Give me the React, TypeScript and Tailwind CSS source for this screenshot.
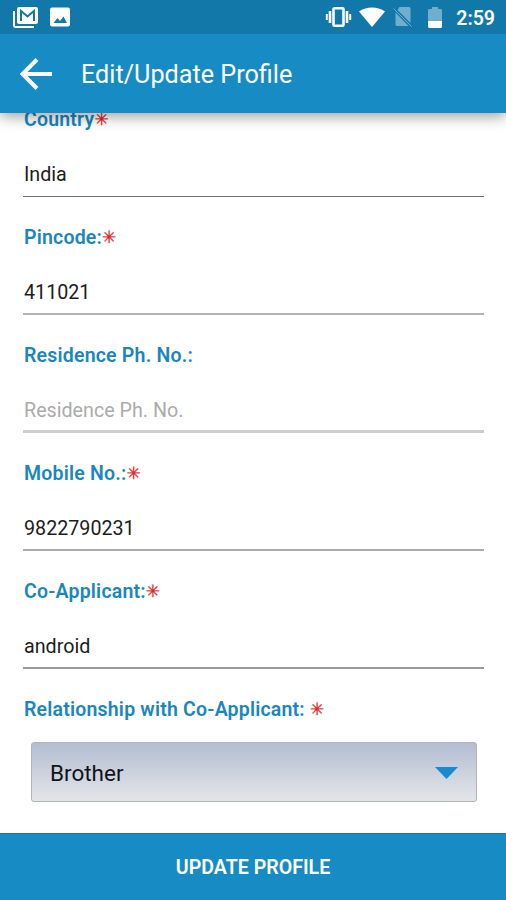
import type { ReactNode } from 'react';

interface Field {
  label: string;
  required: boolean;
  value: string;
  placeholder?: string;
  line: string;
}

const fields: Field[] = [
  { label: 'Country', required: true, value: 'India', line: 'border-b border-[#6f6f6f]' },
  { label: 'Pincode:', required: true, value: '411021', line: 'border-b-2 border-[#b3b3b3]' },
  { label: 'Residence Ph. No.:', required: false, value: '', placeholder: 'Residence Ph. No.', line: 'border-b-3 border-[#cdcdcd]' },
  { label: 'Mobile No.:', required: true, value: '9822790231', line: 'border-b-2 border-[#ababab]' },
  { label: 'Co-Applicant:', required: true, value: 'android', line: 'border-b-2 border-[#999999]' },
];

const Label = ({ required, children }: { required: boolean; children: ReactNode }) => (
  <div className="flex h-6 items-center whitespace-pre pl-px text-[19.500px] font-semibold leading-6 tracking-[0.2px] text-[#1a86c0]">
    <span>{children}</span>
    {required && (
      <span className="-mt-0.5 font-['DejaVu_Sans'] text-[17px] font-normal text-[#e02424] [-webkit-text-stroke:0.3px_#e02424]">✳</span>
    )}
  </div>
);

const StatusBar = () => (
  <div className="flex h-[34px] items-center justify-between bg-[#1278a9] pl-[13px] pr-[11px] text-white">
    <div className="flex items-center gap-3">
      <svg className="h-[21px] w-[25px]" viewBox="0 0 25 21" fill="none">
        <path d="M1 4v14.5c0 .8.7 1.5 1.500 1.500H21" stroke="currentColor" strokeWidth="2" />
        <rect x="4" y="0" width="21" height="17" rx="2" fill="currentColor" />
        <path d="M8 14V4l6.500 5.500L21 4v10" stroke="#1278a9" strokeWidth="2" />
      </svg>
      <svg className="h-5 w-5" viewBox="0 0 20 20">
        <rect width="20" height="19" y=".5" rx="2" fill="currentColor" />
        <path d="M3.500 16l4-5 2.500 3 3.500-4.500L17 16z" fill="#1278a9" />
      </svg>
    </div>
    <div className="flex items-center">
      <svg className="h-5 w-[27px]" viewBox="0 0 27 20" fill="none" stroke="currentColor">
        <rect x="8.500" y="1.300" width="10" height="17.400" rx="1" strokeWidth="2.600" />
        <path d="M5 4v12M22 4v12" strokeWidth="2.600" />
        <path d="M1.800 7v6M25.200 7v6" strokeWidth="2" />
      </svg>
      <svg className="ml-[7px] h-5 w-[26px]" viewBox="0 0 26 20" fill="currentColor">
        <path d="M0 4.500C7.500-1 18.500-1 26 4.500L13 20z" />
      </svg>
      <svg className="ml-2 h-5 w-[19px] opacity-40" viewBox="0 0 19 20" fill="currentColor">
        <path d="M6.500 0H16c.8 0 1.500.7 1.500 1.500V16L4.500 3zM2.500 5.500L15.500 19H4c-.8 0-1.500-.7-1.500-1.500z" />
        <path d="M.5 1.500l18 18" stroke="currentColor" strokeWidth="1" />
      </svg>
      <svg className="ml-4 mt-px h-[21px] w-[14px]" viewBox="0 0 14 21" fill="currentColor">
        <path d="M0 14V3.500C0 2.700.7 2 1.500 2H4V0h6v2h2.500c.8 0 1.500.7 1.500 1.500V14z" opacity=".4" />
        <path d="M0 14h14v5.500c0 .8-.7 1.500-1.500 1.500h-11C.7 21 0 20.300 0 19.500z" />
      </svg>
      <span className="ml-[14px] mt-[3px] text-[19.500px] font-semibold leading-none">2:59</span>
    </div>
  </div>
);

const App = () => {
  return (
    <div className="flex h-[900px] w-full flex-col overflow-hidden bg-white font-['Roboto',sans-serif]">
      <header className="relative z-10 shadow-[0_3px_14px_rgba(0,0,0,0.4)]">
        <StatusBar />
        <div className="flex h-[79px] items-center bg-[#168bc4] pl-5 text-white">
          <svg className="h-8 w-8" viewBox="0 0 32 32" fill="none" stroke="currentColor" strokeWidth="4">
            <path d="M32 16H3M17 1.500L2.500 16 17 30.500" />
          </svg>
          <h1 className="ml-[29px] mt-[3px] text-[25.200px] leading-8">Edit/Update Profile</h1>
        </div>
      </header>

      <main className="min-h-0 flex-1 overflow-hidden">
        <div className="-mt-[34px] pl-[23px] pr-[22px]">
          {fields.map((field) => (
            <div key={field.label} className={`flex h-[118px] flex-col pt-[29px] ${field.line}`}>
              <Label required={field.required}>{field.label}</Label>
              <input
                className="mt-[31px] h-6 w-full bg-transparent pl-px text-[19.700px] text-[#1c1c1c] outline-none placeholder:text-[#ababab]"
                defaultValue={field.value}
                placeholder={field.placeholder}
              />
            </div>
          ))}

          <div className="pt-[29px]">
            <Label required>{'Relationship with Co-Applicant: '}</Label>
            <button className="ml-[8px] mt-5 flex h-[60px] w-[446px] items-center justify-between rounded-[3px] border border-[#b0b3ba] bg-linear-to-b from-[#b3bed1] to-[#e4e5e9] pl-[18px] pr-[18px] text-[22.500px] text-[#111318]">
              <span className="mt-[3px]">Brother</span>
              <svg className="mt-0.5 h-3 w-[23px]" viewBox="0 0 23 12" fill="#168bd0">
                <path d="M0 0h23L11.500 12z" />
              </svg>
            </button>
          </div>
        </div>
      </main>

      <button className="h-[67px] shrink-0 border-t border-[#1278a9] bg-[#168bc4] pt-0.5 text-[19.600px] font-semibold text-white">
        UPDATE PROFILE
      </button>
    </div>
  );
};

export default App;
